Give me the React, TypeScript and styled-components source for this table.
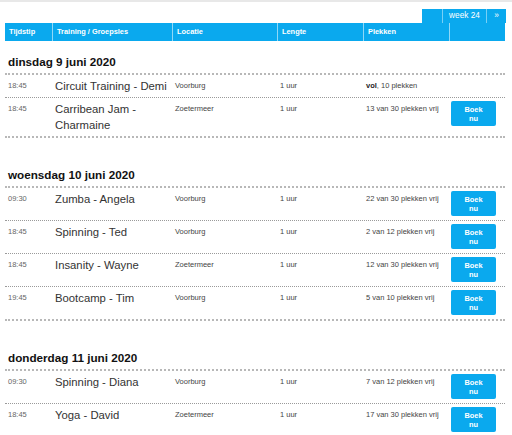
import React from "react";
import styled, { createGlobalStyle } from "styled-components";

const BLUE = "#0aa9ee";
const COLS = "47px 120px 105px 86px 86px 56px";

const GlobalStyle = createGlobalStyle`
  html, body { margin: 0; padding: 0; background: #fff; }
  body { font-family: "Liberation Sans", Arial, sans-serif; color: #333; }
`;

const Page = styled.div`
  border-top: 2px solid #e8e8e8;
  padding: 7px 7px 0 5px;
`;

const NavBar = styled.div`
  display: flex;
  justify-content: flex-end;
  height: 14px;
  margin-right: -1px;
`;

const NavButton = styled.div<{ $w: number }>`
  width: ${(p) => p.$w}px;
  height: 14px;
  background: ${BLUE};
  color: #fff;
  font-size: 8.3px;
  line-height: 13px;
  text-align: center;
  border-left: 1px solid rgba(255, 255, 255, 0.45);
  box-sizing: border-box;
  &:first-child { border-left: none; }
`;

const HeaderRow = styled.div`
  display: grid;
  grid-template-columns: ${COLS};
  height: 18px;
  background: ${BLUE};
`;

const HeaderCell = styled.div`
  color: #fff;
  font-weight: bold;
  font-size: 7.4px;
  line-height: 18px;
  padding: 0 4px;
  border-left: 1px solid rgba(255, 255, 255, 0.55);
  &:first-child { border-left: none; }
`;

const Section = styled.section<{ $first?: boolean }>`
  margin-top: ${(p) => (p.$first ? 0 : 16)}px;
`;

const DayTitle = styled.h2`
  margin: 0;
  padding: 14px 3px 4px;
  font-size: 11.7px;
  line-height: 14px;
  font-weight: bold;
  color: #111;
`;

const Table = styled.div`
  border-top: 2px dotted #b8b8b8;
  border-bottom: 2px dotted #b8b8b8;
`;

const Row = styled.div`
  display: grid;
  grid-template-columns: ${COLS};
  & + & { border-top: 1px dotted #9a9a9a; }
`;

const Cell = styled.div`
  padding: 3px 3px 3px;
  font-size: 7.5px;
  line-height: 16px;
  color: #444;
`;

const TimeCell = styled(Cell)`
  color: #666;
`;

const NameCell = styled(Cell)`
  font-size: 11.3px;
  color: #333;
`;

const ButtonCell = styled(Cell)`
  padding: 3px 2px 4px;
`;

const BookButton = styled.button`
  width: 45px;
  height: 25px;
  padding: 0;
  border: none;
  border-radius: 2px;
  background: ${BLUE};
  color: #fff;
  font-family: "Liberation Sans", Arial, sans-serif;
  font-weight: bold;
  font-size: 7.4px;
  line-height: 9px;
  display: flex;
  flex-direction: column;
  align-items: center;
  justify-content: center;
`;

type Lesson = {
  time: string;
  name: string;
  place: string;
  full?: boolean;
  spots: string;
};

const days: { title: string; lessons: Lesson[] }[] = [
  {
    title: "dinsdag 9 juni 2020",
    lessons: [
      { time: "18:45", name: "Circuit Training - Demi", place: "Voorburg", full: true, spots: "10 plekken" },
      { time: "18:45", name: "Carribean Jam - Charmaine", place: "Zoetermeer", spots: "13 van 30 plekken vrij" },
    ],
  },
  {
    title: "woensdag 10 juni 2020",
    lessons: [
      { time: "09:30", name: "Zumba - Angela", place: "Voorburg", spots: "22 van 30 plekken vrij" },
      { time: "18:45", name: "Spinning - Ted", place: "Voorburg", spots: "2 van 12 plekken vrij" },
      { time: "18:45", name: "Insanity - Wayne", place: "Zoetermeer", spots: "12 van 30 plekken vrij" },
      { time: "19:45", name: "Bootcamp - Tim", place: "Voorburg", spots: "5 van 10 plekken vrij" },
    ],
  },
  {
    title: "donderdag 11 juni 2020",
    lessons: [
      { time: "09:30", name: "Spinning - Diana", place: "Voorburg", spots: "7 van 12 plekken vrij" },
      { time: "18:45", name: "Yoga - David", place: "Zoetermeer", spots: "17 van 30 plekken vrij" },
    ],
  },
];

export default function App() {
  return (
    <>
      <GlobalStyle />
      <Page>
        <NavBar>
          <NavButton $w={20} />
          <NavButton $w={44}>week 24</NavButton>
          <NavButton $w={20}>»</NavButton>
        </NavBar>
        <HeaderRow>
          <HeaderCell>Tijdstip</HeaderCell>
          <HeaderCell>Training / Groepsles</HeaderCell>
          <HeaderCell>Locatie</HeaderCell>
          <HeaderCell>Lengte</HeaderCell>
          <HeaderCell>Plekken</HeaderCell>
          <HeaderCell />
        </HeaderRow>
        {days.map((d, i) => (
          <Section key={d.title} $first={i === 0}>
            <DayTitle>{d.title}</DayTitle>
            <Table>
              {d.lessons.map((l, j) => (
                <Row key={j}>
                  <TimeCell>{l.time}</TimeCell>
                  <NameCell>{l.name}</NameCell>
                  <Cell>{l.place}</Cell>
                  <Cell>1 uur</Cell>
                  <Cell>
                    {l.full ? (
                      <>
                        <b style={{ color: "#222" }}>vol</b>, {l.spots}
                      </>
                    ) : (
                      l.spots
                    )}
                  </Cell>
                  {l.full ? (
                    <Cell />
                  ) : (
                    <ButtonCell>
                      <BookButton>
                        <span>Boek</span>
                        <span>nu</span>
                      </BookButton>
                    </ButtonCell>
                  )}
                </Row>
              ))}
            </Table>
          </Section>
        ))}
      </Page>
    </>
  );
}
